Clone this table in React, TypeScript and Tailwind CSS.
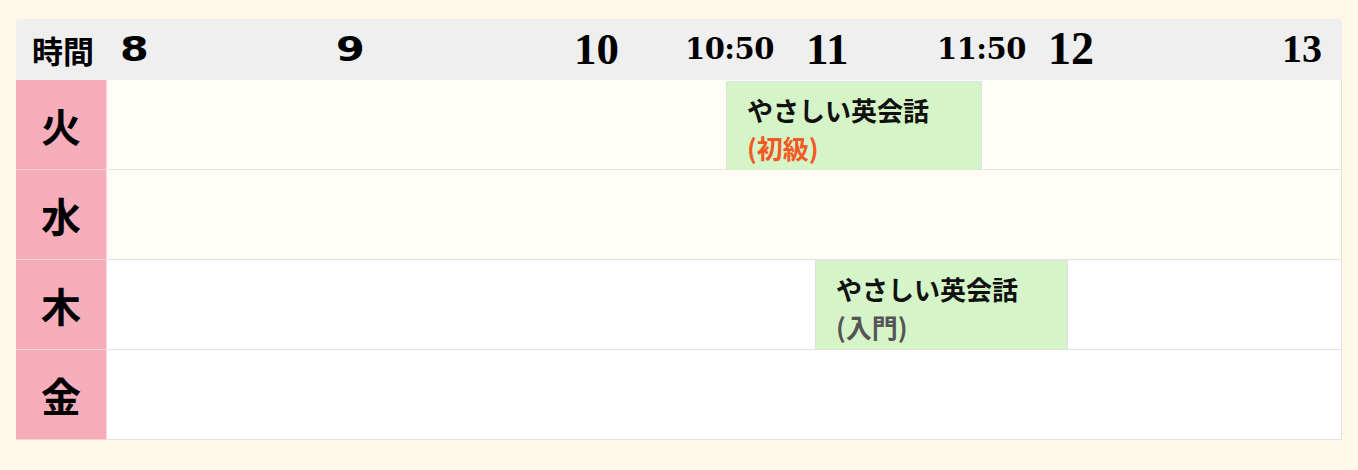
import React from 'react';

type Lesson = {
    title: string;
    level: string;
    levelColor: string;
    left: number;
    width: number;
    top: number;
};

type Day = {
    name: string;
    bg: string;
    lesson?: Lesson;
};

const days: Day[] = [
    {
        name: '火',
        bg: 'bg-[#fffdf6]',
        lesson: { title: 'やさしい英会話', level: '(初級)', levelColor: 'text-[#f15a24]', left: 619, width: 256, top: 1 },
    },
    { name: '水', bg: 'bg-[#fffdf6]' },
    {
        name: '木',
        bg: 'bg-white',
        lesson: { title: 'やさしい英会話', level: '(入門)', levelColor: 'text-[#555555]', left: 708, width: 253, top: 0 },
    },
    { name: '金', bg: 'bg-white' },
];

// time axis labels, x measured from the start of the header
const ticks = [
    { label: '8', left: 104, cls: "font-['DejaVu_Sans'] text-[33px] scale-x-[1.25] origin-left" },
    { label: '9', left: 320, cls: "font-['DejaVu_Sans'] text-[33px] scale-x-[1.25] origin-left" },
    { label: '10', left: 558, cls: "font-['Liberation_Serif'] text-[45px]" },
    { label: '10:50', left: 669, cls: "font-['DejaVu_Serif'] text-[29px] tracking-[-0.5px]" },
    { label: '11', left: 790, cls: "font-['Liberation_Serif'] text-[45px]" },
    { label: '11:50', left: 921, cls: "font-['DejaVu_Serif'] text-[29px] tracking-[-0.5px]" },
    { label: '12', left: 1032, cls: "font-['Liberation_Serif'] text-[46px]" },
    { label: '13', left: 1266, cls: "font-['Liberation_Serif'] text-[40px]" },
];

export default function App() {
    return (
        <div className="min-h-[470px] w-[1358px] bg-[#fef8e6] pl-4 pt-[19px] font-['Noto_Sans_CJK_JP',sans-serif]">
            <div className="w-[1326px]">
                {/* header */}
                <div className="relative flex h-[61px] items-center rounded-t bg-[#efefef] text-black">
                    <div className="pl-4 text-[31px] font-bold leading-none">時間</div>
                    {ticks.map((t) => (
                        <span
                            key={t.label}
                            className={`absolute top-[49%] -translate-y-1/2 font-bold leading-none ${t.cls}`}
                            style={{ left: t.left }}
                        >
                            {t.label}
                        </span>
                    ))}
                </div>

                {/* rows */}
                <div className="border-r border-[#e3e3e3]">
                    {days.map((d) => (
                        <div key={d.name} className="flex h-[90px]">
                            <div className="flex w-[91px] shrink-0 items-center justify-center border-b border-r border-[#fbd3da] bg-[#f7aebc] text-[40px] font-bold text-black">
                                {d.name}
                            </div>
                            <div className={`relative flex-1 border-b border-[#e3e3e3] ${d.bg}`}>
                                {d.lesson && (
                                    <div
                                        className="absolute h-[90px] border border-[#e0e0e0] bg-[#d5f5c8] pl-5 pt-[9px]"
                                        style={{ left: d.lesson.left, width: d.lesson.width, top: d.lesson.top }}
                                    >
                                        <p className="text-[26px] font-semibold leading-[38px] text-[#111]">{d.lesson.title}</p>
                                        <p className={`text-[26px] font-semibold leading-[38px] ${d.lesson.levelColor}`}>{d.lesson.level}</p>
                                    </div>
                                )}
                            </div>
                        </div>
                    ))}
                </div>
            </div>
        </div>
    );
}
